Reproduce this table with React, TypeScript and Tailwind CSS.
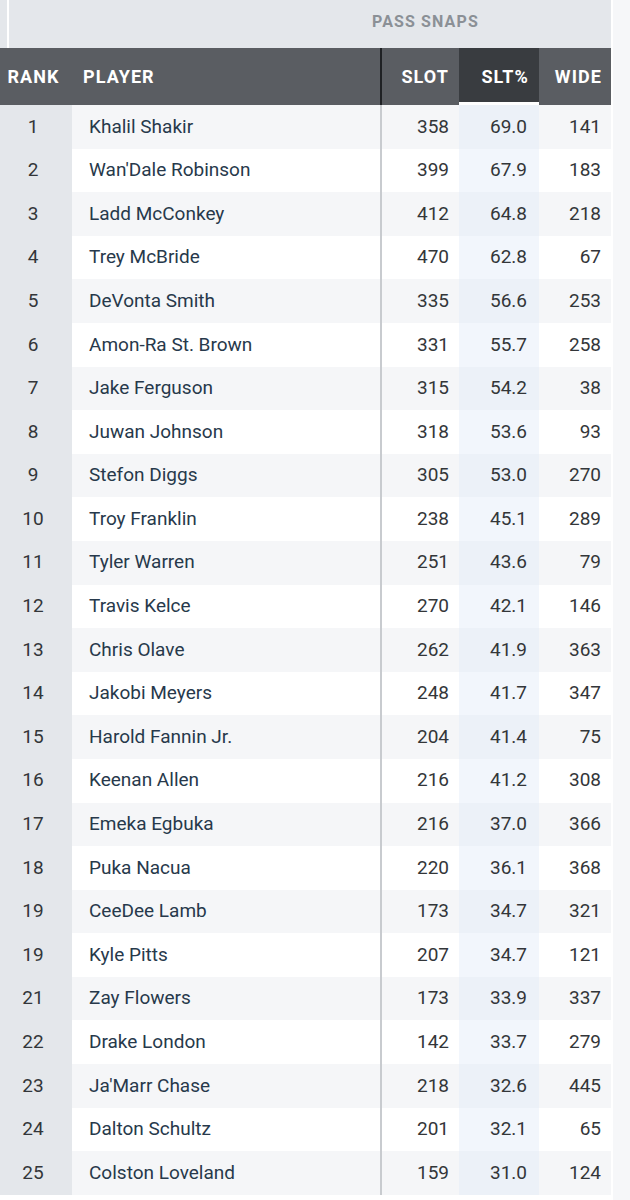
import React from "react";

const rows: [string, string, number, string, number][] = [
  ["1", "Khalil Shakir", 358, "69.0", 141],
  ["2", "Wan'Dale Robinson", 399, "67.9", 183],
  ["3", "Ladd McConkey", 412, "64.8", 218],
  ["4", "Trey McBride", 470, "62.8", 67],
  ["5", "DeVonta Smith", 335, "56.6", 253],
  ["6", "Amon-Ra St. Brown", 331, "55.7", 258],
  ["7", "Jake Ferguson", 315, "54.2", 38],
  ["8", "Juwan Johnson", 318, "53.6", 93],
  ["9", "Stefon Diggs", 305, "53.0", 270],
  ["10", "Troy Franklin", 238, "45.1", 289],
  ["11", "Tyler Warren", 251, "43.6", 79],
  ["12", "Travis Kelce", 270, "42.1", 146],
  ["13", "Chris Olave", 262, "41.9", 363],
  ["14", "Jakobi Meyers", 248, "41.7", 347],
  ["15", "Harold Fannin Jr.", 204, "41.4", 75],
  ["16", "Keenan Allen", 216, "41.2", 308],
  ["17", "Emeka Egbuka", 216, "37.0", 366],
  ["18", "Puka Nacua", 220, "36.1", 368],
  ["19", "CeeDee Lamb", 173, "34.7", 321],
  ["19", "Kyle Pitts", 207, "34.7", 121],
  ["21", "Zay Flowers", 173, "33.9", 337],
  ["22", "Drake London", 142, "33.7", 279],
  ["23", "Ja'Marr Chase", 218, "32.6", 445],
  ["24", "Dalton Schultz", 201, "32.1", 65],
  ["25", "Colston Loveland", 159, "31.0", 124],
];

export default function App() {
  return (
    <div
      className="flex w-[630px] h-[1200px] overflow-hidden bg-white"
      style={{ fontFamily: "Roboto, 'Liberation Sans', sans-serif" }}
    >
      <div className="w-[611px] flex flex-col">
        {/* top band */}
        <div className="h-[48px] flex bg-[#e4e7eb]">
          <div className="w-[7px]" />
          <div className="w-[2px] bg-white" />
          <div className="flex-1 flex items-center pl-[363px] pb-[5px]">
            <span className="text-[16px] font-bold tracking-[0.07em] text-[#8b9096]">
              PASS SNAPS
            </span>
          </div>
        </div>
        {/* header */}
        <div className="h-[57px] grid grid-cols-[72px_308px_2px_77px_80px_72px] bg-[#5a5d62] text-white text-[18px] font-bold tracking-[0.06em]">
          <div className="flex items-center justify-center pr-[5px]">RANK</div>
          <div className="flex items-center pl-[11px]">PLAYER</div>
          <div className="bg-[#1f2124]" />
          <div className="flex items-center justify-end pr-[10px]">SLOT</div>
          <div className="flex items-center justify-end pr-[10px] bg-[#393c40] border-b-[3px] border-white pt-[3px]">
            SLT%
          </div>
          <div className="flex items-center justify-end pr-[9px]">WIDE</div>
        </div>
        {/* body */}
        {rows.map((r, i) => {
          const odd = i % 2 === 0;
          return (
            <div
              key={i}
              className={
                "h-[43.6px] shrink-0 grid grid-cols-[72px_308px_2px_77px_80px_72px] text-[19px] " +
                (odd ? "bg-[#f5f6f8]" : "bg-white")
              }
            >
              <div className="flex items-center justify-center pr-[6px] bg-[#e4e7eb] text-[#333639]">
                {r[0]}
              </div>
              <div className="flex items-center pl-[17px] text-[#27394b] text-[19px]">
                {r[1]}
              </div>
              <div className="bg-[#c8cbcf]" />
              <div className="flex items-center justify-end pr-[10px] text-[#333639]">
                {r[2]}
              </div>
              <div
                className={
                  "flex items-center justify-end pr-[12px] text-[#333639] " +
                  (odd ? "bg-[#ecf1f8]" : "bg-[#f2f6fc]")
                }
              >
                {r[3]}
              </div>
              <div className="flex items-center justify-end pr-[10px] text-[#333639]">
                {r[4]}
              </div>
            </div>
          );
        })}
      </div>
      <div className="w-[19px] border-l-[2px] border-white bg-[#f6f7f9]" />
    </div>
  );
}
